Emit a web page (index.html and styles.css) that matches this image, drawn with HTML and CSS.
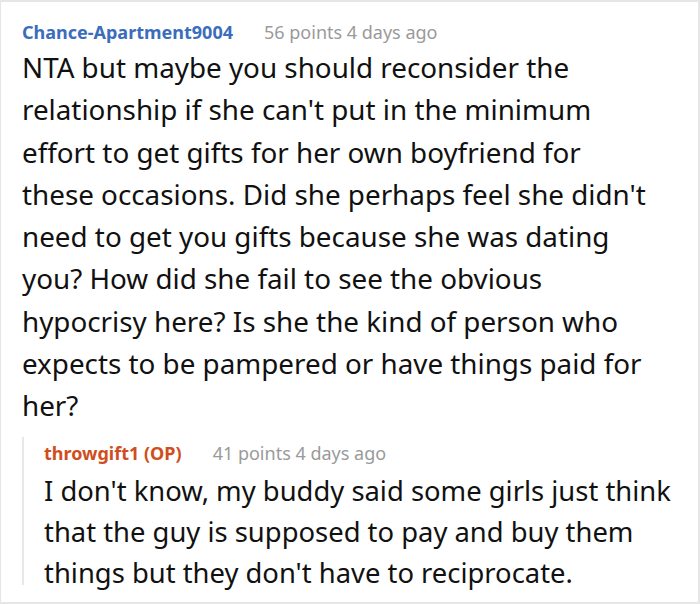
FILE: index.html
```html
<!DOCTYPE html>
<html>
<head>
<meta charset="utf-8">
<link rel="stylesheet" href="styles.css">
</head>
<body>
<div class="card">
  <div class="comment">
    <div class="meta">
      <span class="author">Chance-Apartment9004</span>
      <span class="info">56 points 4 days ago</span>
    </div>
    <p class="body">NTA but maybe you should reconsider the<br>relationship if she can't put in the minimum<br>effort to get gifts for her own boyfriend for<br>these occasions. Did she perhaps feel she didn't<br>need to get you gifts because she was dating<br>you? How did she fail to see the obvious<br>hypocrisy here? Is she the kind of person who<br>expects to be pampered or have things paid for<br>her?</p>
    <div class="reply">
      <div class="meta">
        <span class="author op">throwgift1 (OP)</span>
        <span class="info">41 points 4 days ago</span>
      </div>
      <p class="body narrow">I don't know, my buddy said some girls just think<br>that the guy is supposed to pay and buy them<br>things but they don't have to reciprocate.</p>
    </div>
  </div>
</div>
</body>
</html>
```

FILE: styles.css
```css
html, body {
  margin: 0;
  padding: 0;
  background: #ffffff;
}
body {
  font-family: "Noto Sans", "Open Sans", sans-serif;
}
.card {
  width: 700px;
  height: 604px;
  box-sizing: border-box;
  border: 2px solid #e6e6e6;
  border-left-width: 1px;
  padding: 16px 0 0 21px;
  overflow: hidden;
}
.meta {
  display: flex;
  gap: 31px;
  font-size: 18px;
  line-height: 28px;
  height: 28px;
}
.author {
  font-weight: 700;
  color: #3b6dbd;
}
.author.op {
  color: #d04e1d;
}
.info {
  color: #9a9a9a;
}
.body {
  margin: 0;
  font-size: 27.8px;
  line-height: 42.3px;
  color: #111;
  width: 676px;
  white-space: nowrap;
}
.reply {
  margin-top: 10px;
  padding-top: 2px;
  height: 146px;
  border-left: 2px solid #e8e8e8;
  padding-left: 20px;
}
.narrow {
  margin-top: 3px;
  font-size: 27.4px;
  width: 640px;
  line-height: 41px;
}
```
